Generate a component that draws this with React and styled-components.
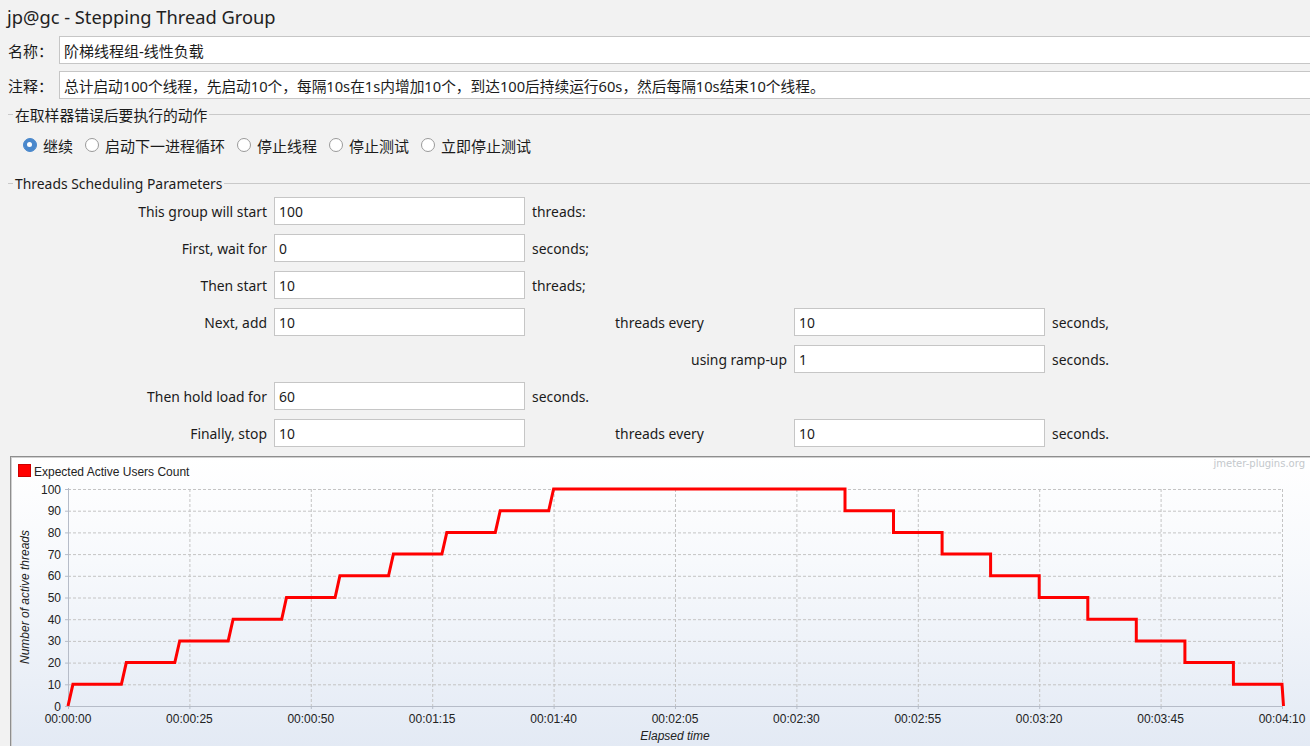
import React from "react";
import styled, { createGlobalStyle } from "styled-components";

const Global = createGlobalStyle`
  html, body { margin: 0; padding: 0; background: #f2f2f2; }
  body { overflow: hidden; }
  * { box-sizing: border-box; }
`;

const UI = `"Noto Sans", "Noto Sans CJK SC", sans-serif`;

const Page = styled.div`
  width: 1310px;
  height: 746px;
  overflow: hidden;
  background: #f2f2f2;
  font-family: ${UI};
  color: #1b1b1b;
`;

const Title = styled.div`
  height: 36px;
  line-height: 34px;
  padding-left: 7px;
  font-size: 18.3px;
  color: #222;
`;

const FieldRow = styled.div`
  display: flex;
  align-items: center;
  height: 28px;
  margin-right: -6px;
  margin-bottom: ${(p) => p.$mb || 0}px;
`;

const RowLabel = styled.label`
  width: 59px;
  padding-left: 8px;
  font-size: 15px;
  white-space: nowrap;
`;

const TextBox = styled.div`
  flex: 1;
  height: 28px;
  background: #fff;
  border: 1px solid #c6c6c6;
  padding-left: 4px;
  display: flex;
  align-items: center;
  font-size: ${(p) => p.$fs || 15}px;
  white-space: nowrap;
  overflow: hidden;
`;

const GroupTitle = styled.div`
  display: flex;
  align-items: center;
  height: 16px;
  margin-top: ${(p) => p.$mt}px;
  margin-right: -6px;
  padding-left: 8px;
  font-size: ${(p) => p.$fs}px;
  white-space: nowrap;
  &::before {
    content: "";
    width: 5px;
    border-top: 1px solid #c9c9c9;
    margin-right: 2px;
  }
  &::after {
    content: "";
    flex: 1;
    border-top: 1px solid #c9c9c9;
    margin-left: 2px;
  }
`;

const RadioRow = styled.div`
  display: flex;
  align-items: center;
  gap: 12px;
  height: 24px;
  margin-top: 11px;
  padding-left: 23px;
`;

const RadioItem = styled.div`
  display: flex;
  align-items: center;
  gap: 6px;
  font-size: 15px;
`;

const RadioDot = styled.span`
  width: 14px;
  height: 14px;
  border-radius: 50%;
  flex: none;
  position: relative;
  background: ${(p) => (p.$on ? "#4a88cc" : "#fff")};
  border: 1.5px solid ${(p) => (p.$on ? "#4a88cc" : "#9a9a9a")};
  &::after {
    content: "";
    display: ${(p) => (p.$on ? "block" : "none")};
    position: absolute;
    left: 3px;
    top: 3px;
    width: 5px;
    height: 5px;
    border-radius: 50%;
    background: #fff;
  }
`;

const ParamGrid = styled.div`
  display: grid;
  grid-template-columns: 267px 251px 255px 251px auto;
  grid-auto-rows: 28px;
  column-gap: 7px;
  row-gap: 9px;
  margin-top: 6px;
  font-size: 13.9px;
`;

const PLabel = styled.div`
  display: flex;
  align-items: center;
  justify-content: ${(p) => p.$align || "flex-start"};
  white-space: nowrap;
`;

const PInput = styled.div`
  background: #fff;
  border: 1px solid #c6c6c6;
  padding-left: 4px;
  display: flex;
  align-items: center;
`;

const ChartPanel = styled.div`
  margin-top: 9px;
  margin-left: 10px;
  height: 300px;
  border-top: 1px solid #8e8e8e;
  border-left: 1px solid #8e8e8e;
  box-shadow: inset 1px 1px 0 #d0d0d0;
  background: linear-gradient(to bottom, #ffffff 0%, #f7f9fc 35%, #e2e9f4 100%);
`;

const ChartSvg = styled.svg`
  display: block;
  font-family: "Liberation Sans", Arial, sans-serif;
`;

const X0 = 68, X1 = 1282, Y0 = 706, Y100 = 489;
const xt = (t) => X0 + (t * (X1 - X0)) / 250;
const yv = (v) => Y0 - (v * (Y0 - Y100)) / 100;
const pad = (n) => String(n).padStart(2, "0");
const fmt = (s) => `${pad(Math.floor(s / 3600))}:${pad(Math.floor((s % 3600) / 60))}:${pad(s % 60)}`;

function buildPoints() {
  const pts = [[0, 0]];
  for (let n = 1; n <= 10; n++) {
    const t = 11 * (n - 1);
    pts.push([t, 10 * (n - 1)]);
    pts.push([t + 1, 10 * n]);
  }
  for (let j = 0; j < 10; j++) {
    const t = 160 + 10 * j;
    pts.push([t, 100 - 10 * j]);
    pts.push([t + (j === 9 ? 0.3 : 0), 90 - 10 * j]);
  }
  return pts.map(([t, v]) => `${xt(t).toFixed(1)},${yv(v).toFixed(1)}`).join(" ");
}

function Chart() {
  const ys = Array.from({ length: 11 }, (_, i) => i * 10);
  const xs = Array.from({ length: 11 }, (_, i) => i * 25);
  return (
    <ChartSvg width="1299" height="290" viewBox="11 457 1299 290">
      <rect x="18.5" y="464.5" width="12" height="12" fill="#ff0000" stroke="#cc0000" />
      <text x="34" y="475.5" fontSize="12" fill="#222">Expected Active Users Count</text>
      <text x="1305" y="467" fontSize="10" fill="#c4c8cc" textAnchor="end" fontFamily="DejaVu Sans, sans-serif">jmeter-plugins.org</text>
      {ys.slice(1).map((v) => (
        <line key={"h" + v} x1={X0} x2={X1} y1={yv(v) + 0.5} y2={yv(v) + 0.5} stroke="#c4c4c4" strokeDasharray="3 2" />
      ))}
      {xs.slice(1).map((t) => (
        <line key={"v" + t} x1={xt(t) + 0.5} x2={xt(t) + 0.5} y1={Y100} y2={Y0} stroke="#c4c4c4" strokeDasharray="3 2" />
      ))}
      <line x1={X0 + 0.5} x2={X0 + 0.5} y1={Y100 - 1} y2={Y0 + 3} stroke="#b6bcc8" />
      <line x1={X0 - 3} x2={X1} y1={Y0 + 0.5} y2={Y0 + 0.5} stroke="#b6bcc8" />
      {ys.map((v) => (
        <g key={"yl" + v}>
          <line x1={X0 - 3} x2={X0} y1={yv(v) + 0.5} y2={yv(v) + 0.5} stroke="#b6bcc8" />
          <text x="61" y={yv(v) + 4.5} fontSize="12" fill="#222" textAnchor="end">{v}</text>
        </g>
      ))}
      {xs.map((t) => (
        <g key={"xl" + t}>
          <line x1={xt(t) + 0.5} x2={xt(t) + 0.5} y1={Y0} y2={Y0 + 3} stroke="#b6bcc8" />
          <text x={xt(t)} y="723" fontSize="12" fill="#222" textAnchor="middle">{fmt(t)}</text>
        </g>
      ))}
      <text x="675" y="740" fontSize="12" fontStyle="italic" fill="#222" textAnchor="middle">Elapsed time</text>
      <text transform="translate(29 597) rotate(-90)" fontSize="12" fontStyle="italic" fill="#222" textAnchor="middle">Number of active threads</text>
      <polyline points={buildPoints()} fill="none" stroke="#ff0000" strokeWidth="3" />
    </ChartSvg>
  );
}

const radios = ["继续", "启动下一进程循环", "停止线程", "停止测试", "立即停止测试"];

export default function App() {
  return (
    <Page>
      <Global />
      <Title>jp@gc - Stepping Thread Group</Title>
      <FieldRow $mb={7}>
        <RowLabel>名称：</RowLabel>
        <TextBox>阶梯线程组-线性负载</TextBox>
      </FieldRow>
      <FieldRow>
        <RowLabel>注释：</RowLabel>
        <TextBox $fs={14.7}>总计启动100个线程，先启动10个，每隔10s在1s内增加10个，到达100后持续运行60s，然后每隔10s结束10个线程。</TextBox>
      </FieldRow>
      <GroupTitle $mt={7} $fs={14.8}>在取样器错误后要执行的动作</GroupTitle>
      <RadioRow>
        {radios.map((r, i) => (
          <RadioItem key={r}>
            <RadioDot $on={i === 0} />
            {r}
          </RadioItem>
        ))}
      </RadioRow>
      <GroupTitle $mt={18} $fs={13.9}>Threads Scheduling Parameters</GroupTitle>
      <ParamGrid>
        <PLabel $align="flex-end">This group will start</PLabel>
        <PInput>100</PInput>
        <PLabel>threads:</PLabel>
        <span /><span />

        <PLabel $align="flex-end">First, wait for</PLabel>
        <PInput>0</PInput>
        <PLabel>seconds;</PLabel>
        <span /><span />

        <PLabel $align="flex-end">Then start</PLabel>
        <PInput>10</PInput>
        <PLabel>threads;</PLabel>
        <span /><span />

        <PLabel $align="flex-end">Next, add</PLabel>
        <PInput>10</PInput>
        <PLabel $align="center">threads every</PLabel>
        <PInput>10</PInput>
        <PLabel>seconds,</PLabel>

        <span /><span />
        <PLabel $align="flex-end">using ramp-up</PLabel>
        <PInput>1</PInput>
        <PLabel>seconds.</PLabel>

        <PLabel $align="flex-end">Then hold load for</PLabel>
        <PInput>60</PInput>
        <PLabel>seconds.</PLabel>
        <span /><span />

        <PLabel $align="flex-end">Finally, stop</PLabel>
        <PInput>10</PInput>
        <PLabel $align="center">threads every</PLabel>
        <PInput>10</PInput>
        <PLabel>seconds.</PLabel>
      </ParamGrid>
      <ChartPanel>
        <Chart />
      </ChartPanel>
    </Page>
  );
}
